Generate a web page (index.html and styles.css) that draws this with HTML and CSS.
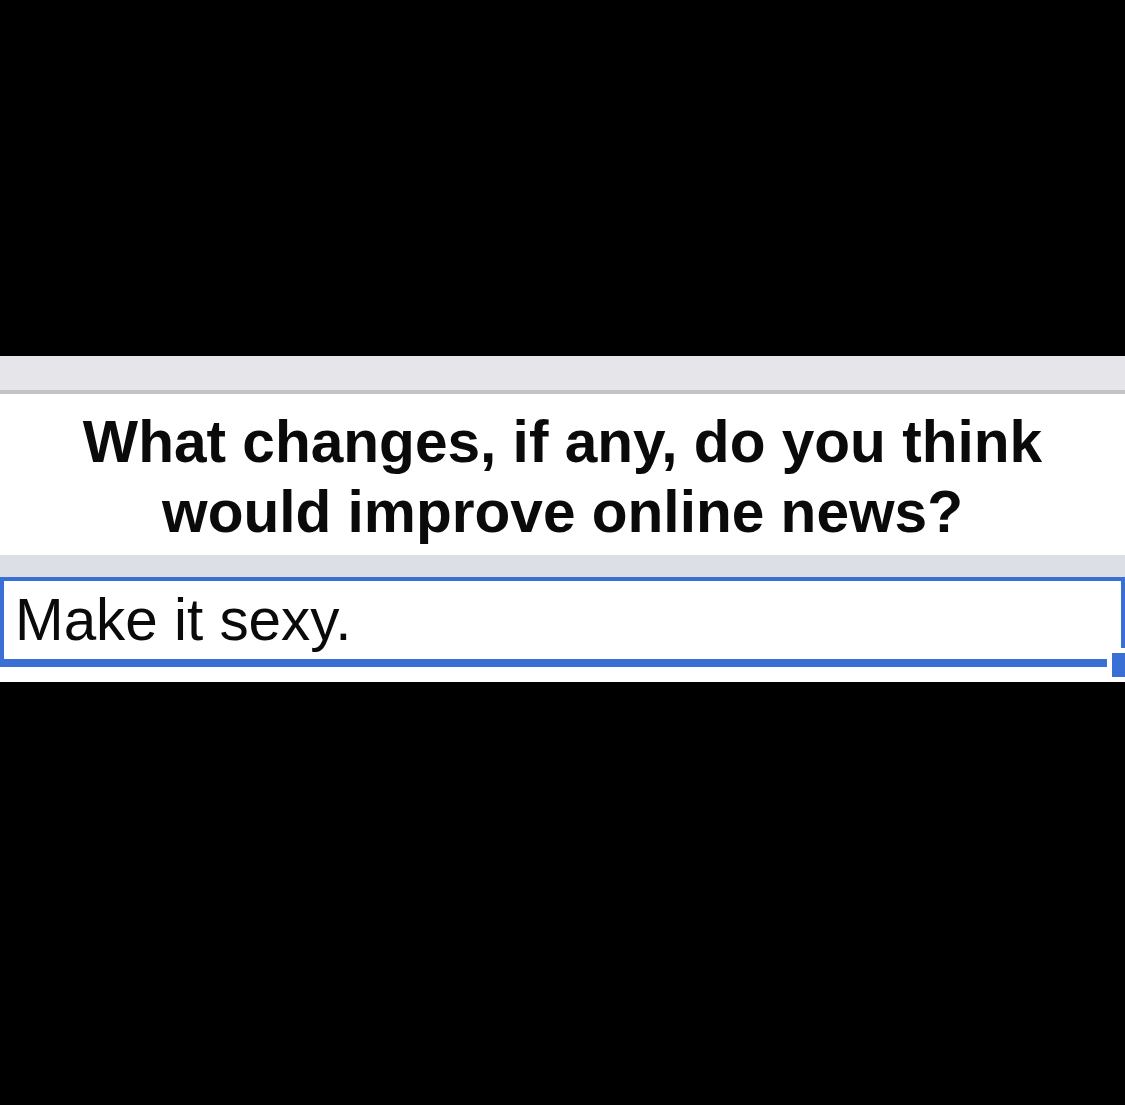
FILE: index.html
```html
<!DOCTYPE html>
<html>
<head>
  <title>Survey</title>
  <meta name="viewport" content="width=device-width, initial-scale=1.0">
  <link rel="stylesheet" href="styles.css">
</head>
<body>
  <div class="panel">
    <div class="toolbar"></div>

    <h1 class="question">What changes, if any, do you think<br>would improve online news?</h1>

    <div class="spacer"></div>

    <div class="answer">
      <div class="answer-text">Make it sexy.</div>
    </div>

    <div class="footer"></div>
  </div>
</body>
</html>
```

FILE: styles.css
```css
body {
  margin: 0;
  background-color: #000;
  font-family: "Liberation Sans", Arial, sans-serif;
  color: #111;
}

.panel {
  margin-top: 356px;
  background-color: #fff;
}

.toolbar {
  height: 34px;
  background-color: #e6e6ea;
  border-bottom: 4px solid #c3c3c6;
}

.question {
  margin: 0;
  padding: 13px 0 8px;
  font-size: 58.6px;
  line-height: 70px;
  font-weight: bold;
  text-align: center;
  color: #0a0a0a;
}

.spacer {
  height: 22px;
  background-color: #dcdfe6;
}

/* focused text box with the resize grip */
.answer {
  position: relative;
  border: 4px solid #3a70d6;
  border-bottom-width: 8px;
  padding-left: 11px;
}

.answer::after {
  content: "";
  position: absolute;
  right: -4px;
  bottom: -18px;
  width: 13px;
  height: 24px;
  background-color: #3a70d6;
  box-shadow: 0 0 0 5px #fff;
}

.answer-text {
  font-size: 58.4px;
  line-height: 78px;
  color: #0a0a0a;
}

.footer {
  height: 15px;
  background-color: #fff;
}
```
